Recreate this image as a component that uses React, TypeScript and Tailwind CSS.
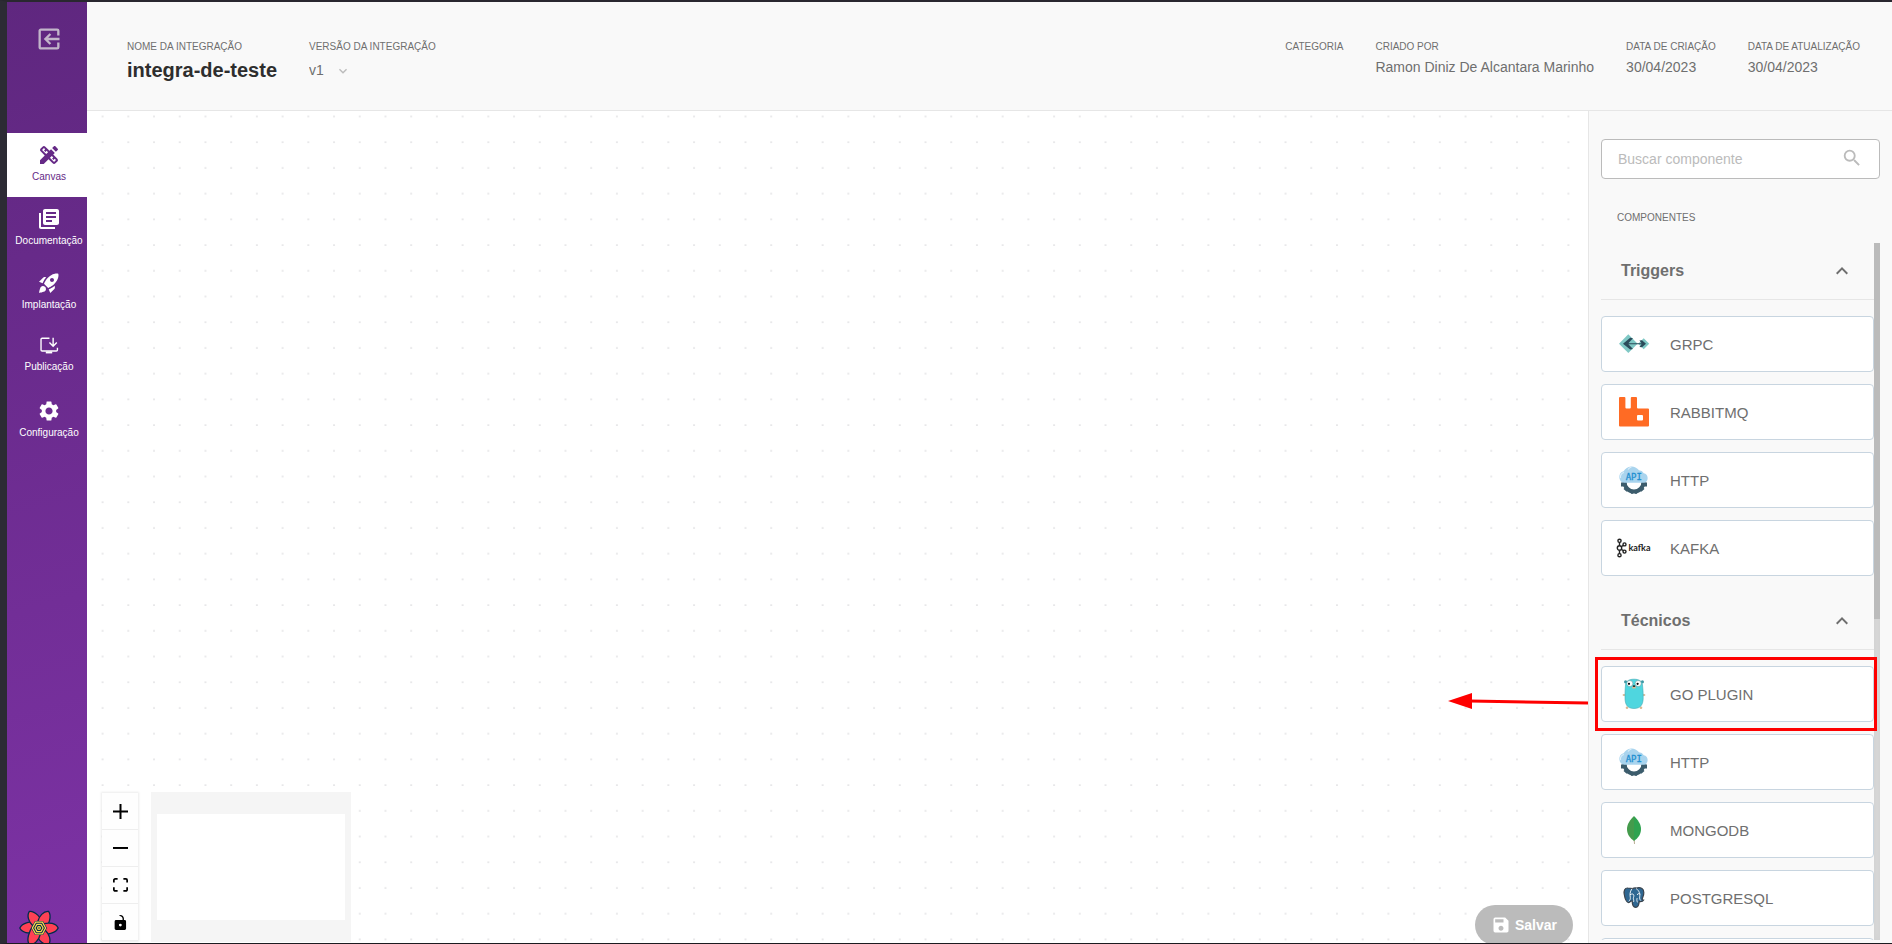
import { FC, ReactNode } from "react";
import {
  MdDesignServices,
  MdExitToApp,
  MdKeyboardArrowDown,
  MdKeyboardArrowUp,
  MdLibraryBooks,
  MdRocketLaunch,
  MdSave,
  MdSearch,
  MdSettings,
} from "react-icons/md";

const GrpcIcon = () => (
  <svg viewBox="0 0 32 32" className="size-8">
    <path d="M1 15.7 10.3 6.3 19.6 15.7 10.3 25z" fill="#7fc8c5" />
    <path d="M20.2 15.7 25.7 10.2 31.2 15.7 25.7 21.2z" fill="#7fc8c5" />
    <path
      d="M5 15.7 12.2 9.8 15 10.3 10.4 15.2H23.6L21.4 12.4 24 12.3 28 15.7 24 19.2 21.4 19 23.6 16.3H10.4L15 21 12.2 21.6z"
      fill="#2b4b5a"
    />
  </svg>
);

const RabbitIcon = () => (
  <svg viewBox="0 0 32 32" className="size-8">
    <path
      d="M2 1h4.4a1 1 0 0 1 1 1v9.500a1 1 0 0 0 1 1h3.400a1 1 0 0 0 1-1V2a1 1 0 0 1 1-1H18a1 1 0 0 1 1 1v9.500a1 1 0 0 0 1 1h10a1 1 0 0 1 1 1V29.500a1 1 0 0 1-1 1H2a1 1 0 0 1-1-1V2a1 1 0 0 1 1-1zM20 19a1 1 0 0 0-1 1v3.500a1 1 0 0 0 1 1h4a1 1 0 0 0 1-1V20a1 1 0 0 0-1-1z"
      fill="#ff6b24"
      fillRule="evenodd"
    />
  </svg>
);

const ApiIcon = () => (
  <svg viewBox="0 0 32 32" className="size-8">
    <path d="M6.500 18a9.500 9.500 0 0 0 19 0" fill="none" stroke="#3c5c6c" strokeWidth="4" />
    <path
      d="M3 18.500h5.500v4H3zM23.500 18.500H29v4h-5.500zM5.500 25l3-3.200 3 3-2.800 3zM26.500 25l-3-3.200-3 3 2.800 3zM12 26h8l-1 3.700h-2l-.6-1.500h-.8l-.6 1.500h-2z"
      fill="#3c5c6c"
    />
    <path
      d="M6 18.800A6 6 0 0 1 5.600 7.200 9.200 9.200 0 0 1 21 6.300a6 6 0 0 1 4.800 3A5 5 0 0 1 26.500 18.800z"
      fill="#a9d4ee"
    />
    <path d="M2.500 14a4.500 4.500 0 0 1 3.500-5.500M10 5.500a6 6 0 0 1 3.500-2.500" stroke="#dceffb" strokeWidth="1.200" fill="none" />
    <text
      x="15.800"
      y="16"
      textAnchor="middle"
      fontFamily="DejaVu Sans Mono, monospace"
      fontSize="9"
      fill="#1f8fd0"
      stroke="#1f8fd0"
      strokeWidth="0.300"
    >
      API
    </text>
  </svg>
);

const KafkaIcon = () => (
  <svg viewBox="0 0 36 32" className="h-8 w-9 shrink-0">
    <g fill="none" stroke="#222" strokeWidth="1.400">
      <path d="M3.500 10v3.500M3.500 18.500V22M5.500 14.500l2-1.200M5.500 17.500l2 1.200" />
      <circle cx="3.500" cy="8.800" r="1.600" />
      <circle cx="3.500" cy="16" r="2.200" />
      <circle cx="3.500" cy="23.200" r="1.600" />
      <circle cx="8.500" cy="12.400" r="1.500" />
      <circle cx="8.500" cy="19.600" r="1.500" />
    </g>
    <text x="12.500" y="19" fontFamily="Lato, sans-serif" fontSize="9" fontWeight="700" fill="#222">
      kafka
    </text>
  </svg>
);

const GopherIcon = () => (
  <svg viewBox="0 0 32 32" className="size-8">
    <g fill="#dcb892">
      <ellipse cx="6" cy="17" rx="1.400" ry="1" />
      <ellipse cx="26" cy="17" rx="1.400" ry="1" />
      <ellipse cx="9" cy="29.800" rx="1.300" ry="1.200" />
      <ellipse cx="23" cy="29.800" rx="1.300" ry="1.200" />
    </g>
    <circle cx="7.600" cy="3.800" r="1.600" fill="#3f98a5" />
    <circle cx="24.400" cy="3.800" r="1.600" fill="#3f98a5" />
    <path
      d="M16 1.200c5 0 8 1.800 8.500 5.800.4 4 .7 7.500.7 12.500 0 7-2.400 11-9.200 11s-9-4-9-11c0-5 .1-8.500.5-12.500C8 3 11 1.200 16 1.200z"
      fill="#4fd6df"
      stroke="#43a9b3"
      strokeWidth=".6"
    />
    <circle cx="11.800" cy="5.500" r="3" fill="#fff" stroke="#52767c" strokeWidth=".4" />
    <circle cx="20.200" cy="5.500" r="3" fill="#fff" stroke="#52767c" strokeWidth=".4" />
    <circle cx="11" cy="5.800" r="1.100" />
    <circle cx="19.600" cy="5.800" r="1.100" />
    <ellipse cx="16" cy="9.400" rx="1.900" ry="1.200" fill="#dcb892" />
    <ellipse cx="16" cy="8.100" rx="1.300" ry=".9" fill="#222" />
  </svg>
);

const MongoIcon = () => (
  <svg viewBox="0 0 32 32" className="size-8">
    <path d="M15.600 25h1.100l.2 5h-.9z" fill="#b6a98e" />
    <path d="M16 2C12 6 9 10 9 15c0 5.500 3 9 7 12z" fill="#449b4c" />
    <path d="M16 2c4 4 7 8 7 13 0 5.500-3 9-7 12z" fill="#2fa350" />
  </svg>
);

const PostgresIcon = () => (
  <svg viewBox="0 0 32 32" className="size-8">
    <path
      d="M10 6C6.500 5.800 5.800 9 6.200 12c.6 4 2.300 8 4 8.500 1.300.3 2-.8 3-1.500h1c0 3 .6 6.300 3.500 6.300s3.300-2.800 3.500-5.800c2 .3 3.800-.3 4.300-1.300-1.200 0-1.700-.6-.8-2.700 1.400-3 1.800-7.500-.7-9-1.800-1-4.200-.8-5.500-.4-1.700-.4-3 0-4 .5C13.300 6.200 11.500 6 10 6z"
      fill="#2f6792"
      stroke="#39424c"
      strokeWidth="1.200"
    />
    <g fill="none" stroke="#fff" strokeWidth=".9" strokeLinecap="round">
      <path d="M13.800 7C11.500 10 12 13 12.300 15.500c.2 1.500-.2 2.500-1.300 3.500M18.500 6.800c3 2.200 3.600 5 3.200 8-.2 1.600 0 2.700.8 3.500" />
      <path d="M12.300 12.500c2-1 3.200-.6 3.500.8.2 1.500-.8 2.600-.3 4 .2 1 .3 1.400.2 2.200M19 16.500c-.4 1.500 0 2.500.3 3.500M22 12c-1.500-.8-2.600-.4-2.600.6" />
    </g>
  </svg>
);

const InstallIcon = () => (
  <svg viewBox="0 0 24 24" className="size-[22px]" fill="none" stroke="currentColor" strokeWidth="1.500">
    <path d="M12.500 3.500H4.500a1.200 1.200 0 0 0-1.200 1.200v11.600a1.200 1.200 0 0 0 1.200 1.200H20a1.200 1.200 0 0 0 1.200-1.200V14" />
    <path d="M16.500 3v8.500M12.500 8.200l4 4 4-4" />
    <path d="M8.500 19h7" strokeWidth="2.200" />
  </svg>
);

const petalAngles = [0, 60, 120, 180, 240, 300];

const FlowerLogo = () => (
  <svg viewBox="-20 -20 40 40" className="size-10">
    <g fill="#ff4154" stroke="#002c4b" strokeWidth="1.300" strokeLinejoin="round">
      {petalAngles.map((angle) => (
        <path key={angle} d="M-5 4.300C-10 5.800-17 4.800-19.200 0-17-5.200-8-7 0-6.500z" transform={`rotate(${angle})`} />
      ))}
    </g>
    <path d="M-4-7H4L8 0 4 7H-4L-8 0z" fill="#002c4b" />
    <g fill="none" stroke="#ffd94c" strokeWidth="1.200">
      <path d="M-3.400-5.800H3.400L6.600 0 3.400 5.800H-3.400L-6.600 0z" />
      <path d="M-2.100-3.600H2.100L4.100 0 2.100 3.600H-2.100L-4.100 0z" />
      <circle r="1.400" />
    </g>
  </svg>
);

interface NavItemProps {
  label: string;
  icon: ReactNode;
  active?: boolean;
}

const NavItem: FC<NavItemProps> = ({ label, icon, active }) => (
  <a
    href="#"
    className={
      active
        ? "flex h-16 flex-col items-center bg-white pt-2.5 pl-1 text-[10px] leading-4 text-[#652986]"
        : "flex h-16 flex-col items-center pt-2.5 pl-1 text-[10px] leading-4 text-white"
    }
  >
    {icon}
    <span className="pt-0.5">{label}</span>
  </a>
);

const Sidebar = () => (
  <aside className="relative flex w-20 shrink-0 flex-col bg-linear-165 from-[#5f277f] to-[#7d32a5]">
    <div className="flex h-[131px] flex-col items-center pt-[23px] pl-[3px]">
      <button type="button" aria-label="Sair">
        <MdExitToApp className="size-7 -scale-x-100 text-[#c2b5ca]" />
      </button>
    </div>
    <nav>
      <NavItem label="Canvas" icon={<MdDesignServices className="size-6" />} active />
      <NavItem label="Documentação" icon={<MdLibraryBooks className="size-6" />} />
      <NavItem label="Implantação" icon={<MdRocketLaunch className="size-6" />} />
      <NavItem label="Publicação" icon={<InstallIcon />} />
      <NavItem label="Configuração" icon={<MdSettings className="size-6" />} />
    </nav>
    <button type="button" aria-label="Abrir ferramentas" className="absolute -bottom-[5px] left-3">
      <FlowerLogo />
    </button>
  </aside>
);

interface InfoProps {
  label: string;
  value?: string;
}

const Info: FC<InfoProps> = ({ label, value }) => (
  <div>
    <p className="text-[10px] leading-4">{label}</p>
    <p className="pt-0.5 text-sm">{value}</p>
  </div>
);

const Header = () => (
  <header className="flex h-[109px] shrink-0 justify-between border-b border-[#e6e6e6] bg-[#f9f9f9] pt-[37px] pr-8 pl-10 text-[#6f6f6f]">
    <div className="flex gap-8">
      <div>
        <p className="text-[10px] leading-4">NOME DA INTEGRAÇÃO</p>
        <h1 className="pt-px text-xl leading-7 font-bold text-[#2e2e2e]">integra-de-teste</h1>
      </div>
      <div>
        <label htmlFor="version" className="block text-[10px] leading-4">
          VERSÃO DA INTEGRAÇÃO
        </label>
        <div className="flex items-center pt-[5px]">
          <select id="version" className="w-[26px] appearance-none bg-transparent text-sm outline-none">
            <option>v1</option>
          </select>
          <MdKeyboardArrowDown className="mt-0.5 size-4 text-[#bbb]" />
        </div>
      </div>
    </div>
    <div className="flex gap-8">
      <Info label="CATEGORIA" />
      <Info label="CRIADO POR" value="Ramon Diniz De Alcantara Marinho" />
      <Info label="DATA DE CRIAÇÃO" value="30/04/2023" />
      <Info label="DATA DE ATUALIZAÇÃO" value="30/04/2023" />
    </div>
  </header>
);

const controls = [
  {
    label: "Aproximar",
    viewBox: "0 0 32 32",
    path: "M32 18.133H18.133V32h-4.266V18.133H0v-4.266h13.867V0h4.266v13.867H32z",
  },
  { label: "Afastar", viewBox: "0 0 32 5", path: "M0 0h32v4.2H0z" },
  {
    label: "Ajustar",
    viewBox: "0 0 32 30",
    path: "M3.692 4.63c0-.53.4-.938.939-.938h5.215V0H4.708C2.13 0 0 2.054 0 4.63v5.216h3.692V4.631zM27.354 0h-5.2v3.692h5.17c.53 0 .984.4.984.939v5.215H32V4.631A4.624 4.624 0 0027.354 0zm.954 24.83c0 .532-.4.94-.939.94h-5.215v3.768h5.215c2.577 0 4.631-2.13 4.631-4.707v-5.139h-3.692v5.139zm-23.677.94c-.531 0-.939-.4-.939-.94v-5.138H0v5.139c0 2.577 2.13 4.707 4.708 4.707h5.138V25.77H4.631z",
  },
  {
    label: "Travar",
    viewBox: "0 0 25 32",
    path: "M21.333 10.667H19.81V7.619C19.81 3.429 16.38 0 12.19 0c-4.114 1.828-1.37 2.133.305 2.438 1.676.305 4.42 2.59 4.42 5.181v3.048H3.047A3.056 3.056 0 000 13.714v15.238A3.056 3.056 0 003.048 32h18.285a3.056 3.056 0 003.048-3.048V13.714a3.056 3.056 0 00-3.048-3.047zM12.19 24.533a3.056 3.056 0 01-3.047-3.047 3.056 3.056 0 013.047-3.048 3.056 3.056 0 013.048 3.048 3.056 3.056 0 01-3.048 3.047z",
  },
];

const Canvas = () => (
  <main className="relative min-w-0 flex-1 overflow-hidden bg-white">
    <svg className="absolute inset-0 size-full" aria-hidden="true">
      <pattern id="dots" x="2.74" y="-7.46" width="25.716" height="25.716" patternUnits="userSpaceOnUse">
        <circle cx="12.86" cy="12.86" r="0.6" fill="#a4a4aa" />
      </pattern>
      <rect width="100%" height="100%" fill="url(#dots)" />
    </svg>
    <div className="absolute bottom-0.5 left-[15px] flex flex-col shadow-[0_0_2px_1px_rgba(0,0,0,0.08)]">
      {controls.map(({ label, viewBox, path }) => (
        <button
          key={label}
          type="button"
          aria-label={label}
          className="flex h-[37px] w-9 items-center justify-center border-b border-[#eee] bg-[#fefefe]"
        >
          <svg viewBox={viewBox} className="max-h-[15px] w-[15px]">
            <path d={path} />
          </svg>
        </button>
      ))}
    </div>
    <div className="absolute bottom-px left-16 flex h-[150px] w-[200px] items-center bg-[#f5f5f5] px-1.5">
      <div className="h-[106px] w-full bg-white" />
    </div>
    <button
      type="button"
      className="absolute right-[15px] -bottom-0.5 flex h-10 items-center gap-1 rounded-full bg-[#bbb] px-4 text-sm font-bold text-white"
    >
      <MdSave className="size-5" />
      Salvar
    </button>
  </main>
);

interface Component {
  name: string;
  icon: ReactNode;
}

interface SectionProps {
  title: string;
  items: Component[];
}

const triggers: Component[] = [
  { name: "GRPC", icon: <GrpcIcon /> },
  { name: "RABBITMQ", icon: <RabbitIcon /> },
  { name: "HTTP", icon: <ApiIcon /> },
  { name: "KAFKA", icon: <KafkaIcon /> },
];

const technical: Component[] = [
  { name: "GO PLUGIN", icon: <GopherIcon /> },
  { name: "HTTP", icon: <ApiIcon /> },
  { name: "MONGODB", icon: <MongoIcon /> },
  { name: "POSTGRESQL", icon: <PostgresIcon /> },
  { name: "", icon: null },
];

const Section: FC<SectionProps> = ({ title, items }) => (
  <section className="pb-[17px]">
    <button
      type="button"
      className="flex h-[57px] w-full items-center justify-between border-b border-[#e6e6e6] pr-5 pl-5 font-bold"
    >
      {title}
      <MdKeyboardArrowUp className="size-6" />
    </button>
    <ul className="flex flex-col gap-3 pt-4">
      {items.map(({ name, icon }, index) => (
        <li key={index} className="flex h-14 items-center rounded border border-[#c8d5e0] bg-white pl-3.5">
          <span className="flex w-9 shrink-0 justify-center">{icon}</span>
          <span className="pt-0.5 pl-[18px] text-[15px]">{name}</span>
        </li>
      ))}
    </ul>
  </section>
);

const ComponentPanel = () => (
  <aside className="relative flex w-[304px] shrink-0 flex-col border-l border-[#e6e6e6] bg-[#f9f9f9] pt-7 pr-3 pb-[3px] pl-3 text-[#6f6f6f]">
    <label className="flex h-10 shrink-0 items-center rounded border border-[#bbb] bg-white pr-4 pl-4">
      <input
        type="text"
        aria-label="Buscar componente"
        placeholder="Buscar componente"
        className="min-w-0 flex-1 text-sm outline-none placeholder:text-[#bbb]"
      />
      <MdSearch className="mb-0.5 size-[22px] text-[#bbb]" />
    </label>
    <h2 className="pt-[31px] pb-[17px] pl-4 text-[10px] leading-4">COMPONENTES</h2>
    <div className="flex min-h-0 flex-1">
      <div className="min-w-0 flex-1 overflow-hidden">
        <Section title="Triggers" items={triggers} />
        <Section title="Técnicos" items={technical} />
      </div>
      <div className="w-1.5 bg-[#dadada] shadow-[inset_0_0_6px_rgba(0,0,0,0.05)]">
        <div className="h-[54%] bg-[#bbb]" />
      </div>
    </div>

    {/* drag hint over the Go plugin card */}
    <div className="pointer-events-none absolute top-[546px] right-[15px] left-1.5 h-[74px] border-3 border-[#fe0000]" />
    <svg
      viewBox="0 0 140 18"
      className="pointer-events-none absolute top-[581px] right-full mr-px h-[18px] w-[140px]"
    >
      <path d="M22 9 140 11" stroke="#fe0000" strokeWidth="3" />
      <path d="M0 9 24 1V17z" fill="#fe0000" />
    </svg>
  </aside>
);

export default function App() {
  return (
    <div className="flex h-screen overflow-hidden border-t-2 border-b border-l-7 border-t-[#29272f] border-b-[#1c1b20] border-l-[#2c2b34] font-['Liberation_Sans',Arial,sans-serif]">
      <Sidebar />
      <div className="flex min-w-0 flex-1 flex-col">
        <Header />
        <div className="flex min-h-0 flex-1">
          <Canvas />
          <ComponentPanel />
        </div>
      </div>
    </div>
  );
}
